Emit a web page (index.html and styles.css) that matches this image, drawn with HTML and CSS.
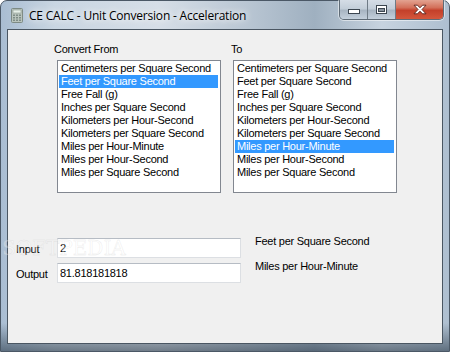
FILE: index.html
```html
<!DOCTYPE html>
<html>
<head>
<meta charset="utf-8">
<link rel="stylesheet" href="styles.css">
</head>
<body>
<div class="window">
  <div class="titlebar">
    <svg class="app-icon" width="12" height="15" viewBox="0 0 12 15">
      <rect x="0.5" y="0.5" width="11" height="14" rx="1" fill="#b9c4bd" stroke="#7d8a84"/>
      <rect x="2" y="2" width="8" height="3" fill="#e6efe8" stroke="#8c9a92" stroke-width="0.6"/>
      <g fill="#7e8c86">
        <rect x="2" y="6.5" width="2" height="1.5"/><rect x="5" y="6.5" width="2" height="1.5"/><rect x="8" y="6.5" width="2" height="1.5"/>
        <rect x="2" y="9" width="2" height="1.5"/><rect x="5" y="9" width="2" height="1.5"/><rect x="8" y="9" width="2" height="1.5"/>
        <rect x="2" y="11.5" width="2" height="1.5"/><rect x="5" y="11.5" width="2" height="1.5"/><rect x="8" y="11.5" width="2" height="1.5"/>
      </g>
    </svg>
    <span class="title">CE CALC - Unit Conversion - Acceleration</span>
    <div class="caption-buttons">
      <div class="cbtn cbtn-min">
        <svg width="12" height="5" viewBox="0 0 12 5"><rect x="0.5" y="0.5" width="11" height="4" fill="#fff" stroke="#3c4650"/></svg>
      </div>
      <div class="cbtn cbtn-max">
        <svg width="11" height="9" viewBox="0 0 11 9"><rect x="0.5" y="0.5" width="10" height="8" fill="#fff" stroke="#3c4650"/><rect x="2.5" y="3.5" width="6" height="3" fill="#8a949e" stroke="#3c4650"/></svg>
      </div>
      <div class="cbtn cbtn-close">
        <svg width="14" height="11" viewBox="0 0 14 11"><path d="M1 1.2 L4.5 1.2 L7 3.8 L9.5 1.2 L13 1.2 L9 5.5 L13 9.8 L9.5 9.8 L7 7.2 L4.5 9.8 L1 9.8 L5 5.5 Z" fill="#fff" stroke="#5a2018" stroke-width="0.9" stroke-linejoin="round"/></svg>
      </div>
    </div>
  </div>
  <div class="client">
    <div class="lists">
      <div class="col col-from">
        <div class="label">Convert From</div>
        <div class="listbox">
          <div class="item">Centimeters per Square Second</div>
          <div class="item selected">Feet per Square Second</div>
          <div class="item">Free Fall (g)</div>
          <div class="item">Inches per Square Second</div>
          <div class="item">Kilometers per Hour-Second</div>
          <div class="item">Kilometers per Square Second</div>
          <div class="item">Miles per Hour-Minute</div>
          <div class="item">Miles per Hour-Second</div>
          <div class="item">Miles per Square Second</div>
        </div>
      </div>
      <div class="col col-to">
        <div class="label">To</div>
        <div class="listbox">
          <div class="item">Centimeters per Square Second</div>
          <div class="item">Feet per Square Second</div>
          <div class="item">Free Fall (g)</div>
          <div class="item">Inches per Square Second</div>
          <div class="item">Kilometers per Hour-Second</div>
          <div class="item">Kilometers per Square Second</div>
          <div class="item selected">Miles per Hour-Minute</div>
          <div class="item">Miles per Hour-Second</div>
          <div class="item">Miles per Square Second</div>
        </div>
      </div>
    </div>
    <div class="io">
      <div class="io-label">Input</div>
      <div class="textbox">2</div>
      <div class="unit">Feet per Square Second</div>
      <div class="io-label">Output</div>
      <div class="textbox">81.818181818</div>
      <div class="unit">Miles per Hour-Minute</div>
    </div>
    <div class="watermark">SOFTPEDIA</div>
  </div>
</div>
</body>
</html>
```
FILE: styles.css
```css
* { box-sizing: border-box; }
html, body { margin: 0; padding: 0; }
body {
  width: 450px;
  height: 352px;
  background: #ffffff;
  overflow: hidden;
  font-family: "Liberation Sans", Arial, sans-serif;
}
.window {
  width: 450px;
  height: 352px;
  display: flex;
  flex-direction: column;
  padding: 0 6px 7px 6px;
  border: 1px solid #4b5866;
  border-radius: 7px 7px 0 0;
  background:
    linear-gradient(180deg, rgba(255,255,255,0.0) 0%, rgba(255,255,255,0) 92%, rgba(30,45,60,0.55) 100%),
    linear-gradient(90deg, #a9bdd2 0%, #c9d6e2 12%, #d6dee7 35%, #b9c6d3 55%, #9fb0c0 70%, #c7d3df 85%, #aebfd0 100%);
}
.titlebar {
  position: relative;
  height: 28px;
  display: flex;
  align-items: center;
  padding-left: 4px;
  flex: none;
}
.app-icon { flex: none; margin-top: 1px; }
.title {
  margin-left: 6px;
  font-family: "Open Sans", "Noto Sans", sans-serif;
  font-size: 12px;
  letter-spacing: -0.2px;
  color: #000;
  text-shadow: 0 0 6px #fff, 0 0 10px rgba(255,255,255,0.9);
  margin-top: 1px;
}
.caption-buttons {
  position: absolute;
  top: -1px;
  right: -1px;
  display: flex;
  height: 20px;
  border: 1px solid #5f6b76;
  border-top: none;
  border-radius: 0 0 5px 5px;
  overflow: hidden;
  box-shadow: 0 0 0 1px rgba(255,255,255,0.5);
}
.cbtn {
  display: flex;
  align-items: center;
  justify-content: center;
  height: 100%;
}
.cbtn-min {
  width: 28px;
  background: linear-gradient(180deg, #d5dde6 0%, #c3ced9 45%, #a8b5c2 55%, #c4d0dc 100%);
  border-right: 1px solid #6f7b86;
  padding-top: 4px;
}
.cbtn-max {
  width: 28px;
  background: linear-gradient(180deg, #d5dde6 0%, #c3ced9 45%, #a8b5c2 55%, #c4d0dc 100%);
  border-right: 1px solid #6f7b86;
}
.cbtn-close {
  width: 47px;
  background: linear-gradient(180deg, #e3a391 0%, #d3705a 40%, #c4402a 55%, #d4573c 100%);
}
.client {
  position: relative;
  flex: 1;
  background: #f0f0f0;
  border: 1px solid #4a5662;
  font-size: 11px;
  letter-spacing: -0.25px;
  color: #000;
}
.lists {
  display: flex;
  gap: 10px;
  padding: 13px 0 0 46px;
}
.col { display: flex; flex-direction: column; }
.label {
  line-height: 13px;
  height: 13px;
}
.listbox {
  margin-top: 4px;
  width: 164px;
  height: 133px;
  background: #fff;
  border: 1px solid #828790;
  padding: 1px;
}
.col-from .listbox { margin-left: 3px; }
.col-to .listbox { margin-left: 2px; }
.item {
  height: 13px;
  line-height: 13px;
  padding-left: 2px;
  white-space: nowrap;
  margin-right: 1px;
}
.item.selected {
  background: #3399ff;
  color: #fff;
}
.io {
  display: grid;
  grid-template-columns: 41px 184px auto;
  grid-auto-rows: 20px;
  row-gap: 5px;
  padding: 45px 0 0 8px;
}
.io-label {
  line-height: 13px;
  margin-top: 5px;
}
.textbox {
  background: #fff;
  border: 1px solid #dcdfe3;
  border-top-color: #b6bcc4;
  padding-left: 2px;
  line-height: 18px;
}
.unit {
  line-height: 13px;
  margin-top: -3px;
  margin-left: 14px;
}
.watermark {
  position: absolute;
  left: -6px;
  top: 206px;
  font-family: "DejaVu Serif", serif;
  font-size: 20px;
  letter-spacing: 0;
  color: rgba(255,255,255,0.3);
  -webkit-text-stroke: 0.4px rgba(190,190,190,0.35);
  pointer-events: none;
}
```
